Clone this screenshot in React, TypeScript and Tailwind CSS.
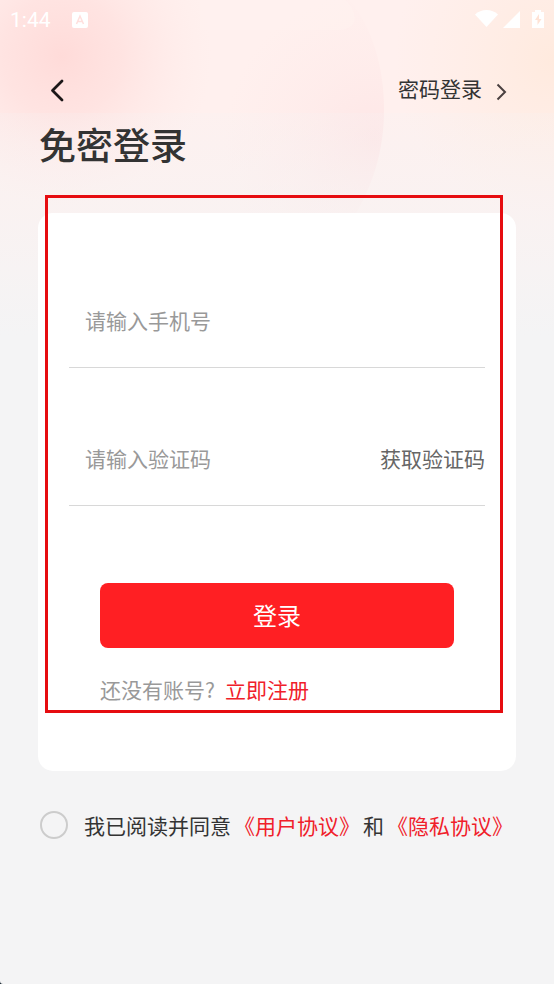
const Backdrop = () => {
  return (
    <svg
      className="absolute inset-x-0 top-0 h-[360px] w-full"
      viewBox="0 0 554 360"
      preserveAspectRatio="none"
      aria-hidden="true"
    >
      <defs>
        <radialGradient id="rose" gradientUnits="userSpaceOnUse" cx="62" cy="56" r="150">
          <stop offset="0" stopColor="#ffdbd9" />
          <stop offset="0.4" stopColor="#ffdddb" stopOpacity="0.65" />
          <stop offset="1" stopColor="#ffe9e7" stopOpacity="0" />
        </radialGradient>
        <radialGradient id="peach" gradientUnits="userSpaceOnUse" cx="554" cy="60" r="160">
          <stop offset="0" stopColor="#ffeade" />
          <stop offset="1" stopColor="#ffece2" stopOpacity="0" />
        </radialGradient>
        <radialGradient id="disc" gradientUnits="userSpaceOnUse" cx="374" cy="140" r="150">
          <stop offset="0" stopColor="#fde0e1" stopOpacity="0.65" />
          <stop offset="0.5" stopColor="#fde4e4" stopOpacity="0.3" />
          <stop offset="1" stopColor="#fde6e6" stopOpacity="0" />
        </radialGradient>
        <linearGradient id="fade" x1="0" y1="0" x2="0" y2="1">
          <stop offset="0" stopColor="#f4f4f5" stopOpacity="0.18" />
          <stop offset="0.4" stopColor="#f4f4f5" stopOpacity="0.5" />
          <stop offset="0.9" stopColor="#f4f4f5" />
        </linearGradient>
      </defs>
      <rect width="554" height="360" fill="#fff0ee" />
      <rect width="554" height="360" fill="url(#rose)" />
      <rect width="554" height="360" fill="url(#peach)" />
      <path d="M100 0H350C372 28 384 66 384 110C384 152 372 190 348 226H100Z" fill="url(#disc)" />
      <path d="M200 0H345Q353 6 355 18Q355 28 340 30H200Z" fill="#fff4f3" fillOpacity="0.3" />
      <rect y="113" width="554" height="247" fill="url(#fade)" />
    </svg>
  );
};

const StatusBar = () => {
  return (
    <div className="flex h-9 items-center justify-between pt-1 pr-2 pl-[10px] text-white">
      <div className="flex items-center gap-[21px]">
        <span className="font-[Roboto,sans-serif] text-[21px] leading-6">1:44</span>
        <svg width="16" height="16" viewBox="0 0 16 16" aria-hidden="true">
          <rect width="16" height="16" rx="2" fill="#fff" />
          <path d="M4.5 12L8 4L11.500 12M5.800 9.500H10.200" fill="none" stroke="#ffdfdd" strokeWidth="1.500" />
        </svg>
      </div>
      <svg width="72" height="22" viewBox="0 0 72 22" fill="currentColor" aria-hidden="true">
        <path d="M1 5.500C7 -0.500 18 -0.500 24 5.500L12.500 18Z" />
        <path d="M46 2V19H29Z" />
        <path d="M58 3H61V1H67V3H70V19H58Z" />
        <path d="M65 5L61 11H63.500V16L67.500 10H65Z" fill="#ffe3d6" />
      </svg>
    </div>
  );
};

const Header = () => {
  return (
    <header className="flex items-center justify-between pt-7 pr-[47px] pl-[39px]">
      <button type="button" aria-label="返回" className="flex h-12 w-9 items-center justify-center pt-[3px]">
        <svg width="16" height="24" viewBox="0 0 16 24" aria-hidden="true">
          <path
            d="M13 3L3.500 12.500L13 22"
            fill="none"
            stroke="#1c1718"
            strokeWidth="2.800"
            strokeLinecap="round"
            strokeLinejoin="round"
          />
        </svg>
      </button>
      <a href="#password" className="flex h-12 items-center gap-[14px] text-[21px] leading-8 text-[#333]">
        密码登录
        <svg width="11" height="18" viewBox="0 0 11 18" className="mt-2" aria-hidden="true">
          <path d="M1.500 1.500L9 9L1.500 16.500" fill="none" stroke="#4a4040" strokeWidth="2" />
        </svg>
      </a>
    </header>
  );
};

const LoginForm = () => {
  return (
    <form
      className="relative mx-[38px] mt-[45px] rounded-[15px] bg-white px-[31px] pt-[63px] pb-[66px]"
      onSubmit={(e) => e.preventDefault()}
    >
      <div className="flex h-[92px] items-center border-b border-[#d8d8d8] pb-1 pl-4">
        <input
          type="tel"
          aria-label="手机号"
          placeholder="请输入手机号"
          className="w-full min-w-0 text-[21px] leading-8 outline-none placeholder:text-[#999]"
        />
      </div>
      <div className="mt-[46px] flex h-[92px] items-center border-b border-[#d8d8d8] pb-1 pl-4">
        <input
          type="text"
          aria-label="验证码"
          placeholder="请输入验证码"
          className="w-full min-w-0 text-[21px] leading-8 outline-none placeholder:text-[#999]"
        />
        <button type="button" className="shrink-0 text-[21px] leading-8 text-[#666]">
          获取验证码
        </button>
      </div>
      <div className="mx-[31px] mt-[77px]">
        <button type="submit" className="h-[65px] w-full rounded-lg bg-[#ff1f23] pb-[2px] text-2xl text-white">
          登录
        </button>
        <p className="mt-[25px] flex gap-[10px] text-[21px] leading-8 text-[#999]">
          还没有账号?
          <a href="#register" className="text-[#f0202a]">
            立即注册
          </a>
        </p>
      </div>
      {/* highlight frame */}
      <div className="pointer-events-none absolute -top-[18px] right-[13px] bottom-[58px] left-[7px] border-3 border-[#e60c10]" />
    </form>
  );
};

const Agreement = () => {
  return (
    <div className="mt-[38px] flex items-center gap-4 px-10 text-[21px] leading-8 text-[#333]">
      <input
        id="agree"
        type="checkbox"
        className="size-7 shrink-0 appearance-none rounded-full border-2 border-[#ccc] checked:bg-[#ff1f23]"
      />
      <div className="flex gap-[3px] whitespace-nowrap">
        <label htmlFor="agree">我已阅读并同意</label>
        <a href="#terms" className="text-[#f0202a]">
          《用户协议》
        </a>
        <span>和</span>
        <a href="#privacy" className="text-[#f0202a]">
          《隐私协议》
        </a>
      </div>
    </div>
  );
};

const App = () => {
  return (
    <div className="relative min-h-screen overflow-hidden bg-[#f4f4f5] font-['Noto_Sans_CJK_SC',sans-serif]">
      <Backdrop />
      <main className="relative">
        <StatusBar />
        <Header />
        <h1 className="mt-2 px-[39px] text-[37px] leading-12 font-medium text-[#333]">免密登录</h1>
        <LoginForm />
        <Agreement />
      </main>
      <svg width="4" height="4" viewBox="0 0 4 4" className="absolute bottom-0 left-0" aria-hidden="true">
        <path d="M0 1Q0 4 3 4H0Z" fill="#12202c" />
      </svg>
    </div>
  );
};

export default App;
